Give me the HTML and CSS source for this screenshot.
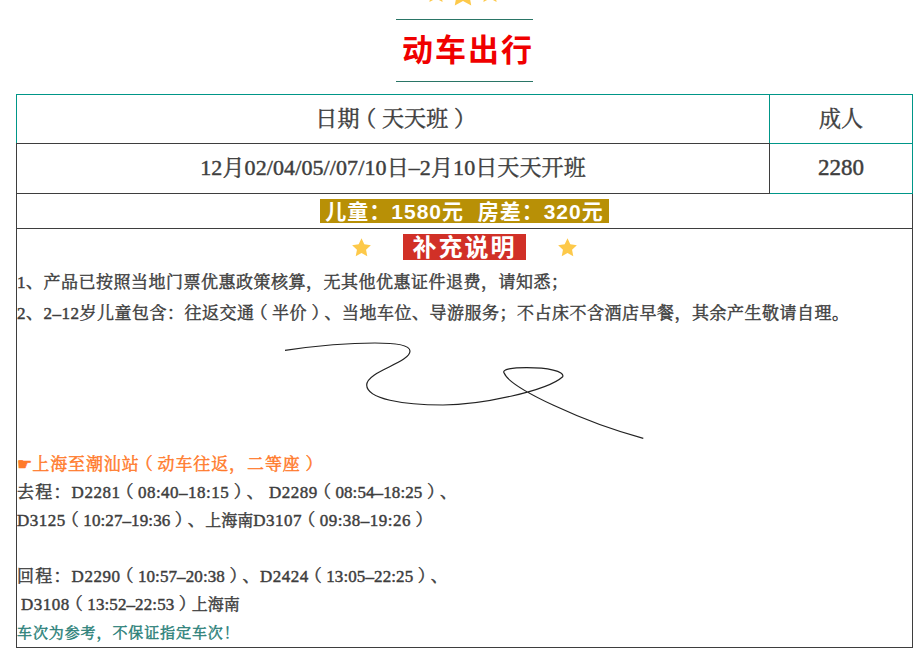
FILE: index.html
```html
<!DOCTYPE html>
<html lang="zh">
<head>
<meta charset="utf-8">
<title>动车出行</title>
<link rel="stylesheet" href="styles.css">
</head>
<body>
<div class="page">
  <div class="top-stars">
    <svg class="star star-s" viewBox="0 0 24 24"><path d="M12 1.5l3.2 6.9 7.5.9-5.5 5.2 1.4 7.5L12 18.4l-6.600 3.600 1.400-7.500-5.500-5.200 7.500-.9z"/></svg>
    <svg class="star star-m" viewBox="0 0 24 24"><path d="M12 1.5l3.2 6.9 7.5.9-5.5 5.2 1.4 7.500L12 18.400l-6.600 3.600 1.400-7.500-5.500-5.200 7.500-.9z"/></svg>
    <svg class="star star-s" viewBox="0 0 24 24"><path d="M12 1.5l3.2 6.900 7.500.9-5.500 5.200 1.400 7.500L12 18.400l-6.600 3.600 1.400-7.500-5.500-5.200 7.500-.9z"/></svg>
  </div>
  <div class="title-wrap"><h1 class="title">动车出行</h1></div>
  <table class="price">
    <colgroup><col class="col-a"><col class="col-b"></colgroup>
    <tr class="row-head">
      <td class="cell head-a">日期<span class="p">（</span>天天班<span class="p">）</span></td>
      <td class="cell head-b">成人</td>
    </tr>
    <tr class="row-data">
      <td class="cell data-a">12月02/04/05//07/10日–2月10日天天开班</td>
      <td class="cell data-b">2280</td>
    </tr>
    <tr class="row-badge">
      <td class="cell badge-cell" colspan="2"><span class="badge">儿童：1580元&nbsp; 房差：320元</span></td>
    </tr>
    <tr>
      <td class="cell notes" colspan="2">
        <div class="note-head">
          <svg class="star star-l" viewBox="0 0 24 24"><path d="M12 1.500l3.200 6.900 7.500.9-5.500 5.200 1.400 7.500L12 18.400l-6.600 3.600 1.400-7.500-5.500-5.200 7.500-.9z"/></svg>
          <span class="note-label">补充说明</span>
          <svg class="star star-l" viewBox="0 0 24 24"><path d="M12 1.500l3.200 6.900 7.500.9-5.500 5.200 1.400 7.500L12 18.400l-6.600 3.600 1.400-7.500-5.500-5.200 7.500-.9z"/></svg>
        </div>
        <p class="note">1、产品已按照当地门票优惠政策核算，无其他优惠证件退费，请知悉；</p>
        <p class="note">2、2–12岁儿童包含：往返交通<span class="p">（</span>半价<span class="p">）</span>、当地车位、导游服务；不占床不含酒店早餐，其余产生敬请自理。</p>
        <div class="sign-wrap">
          <svg class="sign" viewBox="0 0 360 96">
            <path d="M0 7.300 C30 3 60 0 90 0 C110 0 125 2 125 8 C125 20 82 28 81.700 42 C82 56 118 62 158 62 C195 62 262 48 277.700 33.700 C280 28 262 24.700 241.700 24.700 C228 24.700 216 26 219.300 30.300 C225 45 300 80 358.300 95.300"/>
          </svg>
        </div>
        <p class="line orange"><span class="hand">☛</span>上海至潮汕站<span class="p">（</span>动车往返，二等座<span class="p">）</span></p>
        <p class="line"><span class="lead">去程：</span>D2281<span class="p">（</span>08:40–18:15<span class="p">）</span>、 D2289<span class="p">（</span><span class="t">08:54–18:25</span><span class="p">）</span>、</p>
        <p class="line">D3125<span class="p">（</span><span class="t">10:27–19:36</span><span class="p">）</span>、<span class="s">上海南</span>D3107<span class="p">（</span>09:38–19:26<span class="p">）</span></p>
        <p class="line">&nbsp;</p>
        <p class="line"><span class="lead">回程：</span>D2290<span class="p">（</span><span class="t">10:57–20:38</span><span class="p">）</span>、D2424<span class="p">（</span><span class="t">13:05–22:25</span><span class="p">）</span>、</p>
        <p class="line indent">D3108<span class="p">（</span><span class="t">13:52–22:53</span><span class="p">）</span><span class="s">上海南</span></p>
        <p class="line teal">车次为参考，不保证指定车次！</p>
      </td>
    </tr>
  </table>
</div>
</body>
</html>
```
FILE: styles.css
```css
* { box-sizing: border-box; }
html, body { margin: 0; padding: 0; background: #fff; }
body { font-family: "Liberation Serif", "Noto Serif CJK SC", "Noto Sans CJK SC", serif; color: #3e3e3e; overflow: hidden; height: 656px; text-spacing-trim: space-all; }
.p { display: inline-block; width: 1.03em; line-height: 1; text-align: center; font-feature-settings: "halt"; letter-spacing: 0; }
.head-a .p { width: 1.01em; }
.orange .p { width: 1.05em; }
.lead { letter-spacing: 1.2px; }
.t { letter-spacing: .1px; }
.s { font-size: 16px; letter-spacing: 0; }
.page { padding: 0 7px 0 16px; }
.top-stars { height: 6px; overflow: hidden; display: flex; justify-content: center; align-items: flex-end; gap: 0; padding-right: 3px; }
.star { fill: #fdc94a; flex: none; }
.star-s { width: 24px; height: 24px; margin-bottom: 2px; }
.star-m { width: 30px; height: 30px; margin-bottom: -2px; }
.star-l { width: 21px; height: 21px; margin-top: 3px; }
.title-wrap { display: flex; justify-content: center; padding-top: 13px; }
.title { margin: 0; width: 137px; height: 63px; padding-left: 6px; border-top: 1px solid #2a7566; border-bottom: 1px solid #2a7566; font: 700 31px/55px "Noto Sans CJK SC", sans-serif; letter-spacing: 2px; color: #f00000; text-align: center; white-space: nowrap; }
.price { margin-top: 12px; width: 897px; border-collapse: collapse; table-layout: fixed; }
.col-b { width: 143px; }
.cell { padding: 0 0 4px; border: 1px solid #3e3e3e; text-align: center; -webkit-text-stroke: 0.45px currentColor; }
.row-head .cell { height: 49px; padding-bottom: 6px; border-top-color: #009688; }
.row-data .cell { height: 50px; }
.row-badge .cell { height: 35px; padding: 0; -webkit-text-stroke: 0; }
.head-a { border-left-color: #009688; border-right-color: #009688; font-size: 22px; letter-spacing: .2px; }
.head-b { border-right-color: #009688; border-bottom-color: #009688; font-size: 22px; }
.data-a { font-size: 22px; letter-spacing: .1px; padding-bottom: 6px; border-right-color: #3e3e3e; }
.data-b { font-size: 23px; padding-bottom: 2px; border-left-color: #3e3e3e; border-right-color: #009688; border-bottom-color: #009688; }
.badge { display: inline-block; width: 289px; height: 24px; background: #b89006; color: #fff; font: 700 21px/25px "Liberation Sans", "Noto Sans CJK SC", sans-serif; letter-spacing: 1px; white-space: nowrap; vertical-align: middle; }
.notes { height: 419px; padding: 0; text-align: left; vertical-align: top; font-size: 17px; letter-spacing: .5px; }
.note-head { display: flex; justify-content: center; align-items: flex-start; gap: 31px; padding-top: 5px; height: 38px; -webkit-text-stroke: 0; }
.note-label { width: 123px; height: 26px; background: #d13027; color: #fff; text-align: center; font: 700 24px/24px "Noto Sans CJK SC", sans-serif; letter-spacing: 2px; white-space: nowrap; }
.note { margin: 0; line-height: 31px; white-space: nowrap; }
.sign-wrap { height: 121px; padding: 14px 0 0 268px; }
.sign { display: block; width: 360px; height: 96px; overflow: visible; fill: none; stroke: #222; stroke-width: 1.2; }
.line { margin: 0; line-height: 28px; white-space: nowrap; }
.orange { color: #ff7a2a; letter-spacing: .9px; }
.hand { font-family: "DejaVu Sans", sans-serif; letter-spacing: 0; }
.indent { padding-left: 4px; }
.teal { color: #2a8078; font-size: 15px; letter-spacing: .9px; }
```
